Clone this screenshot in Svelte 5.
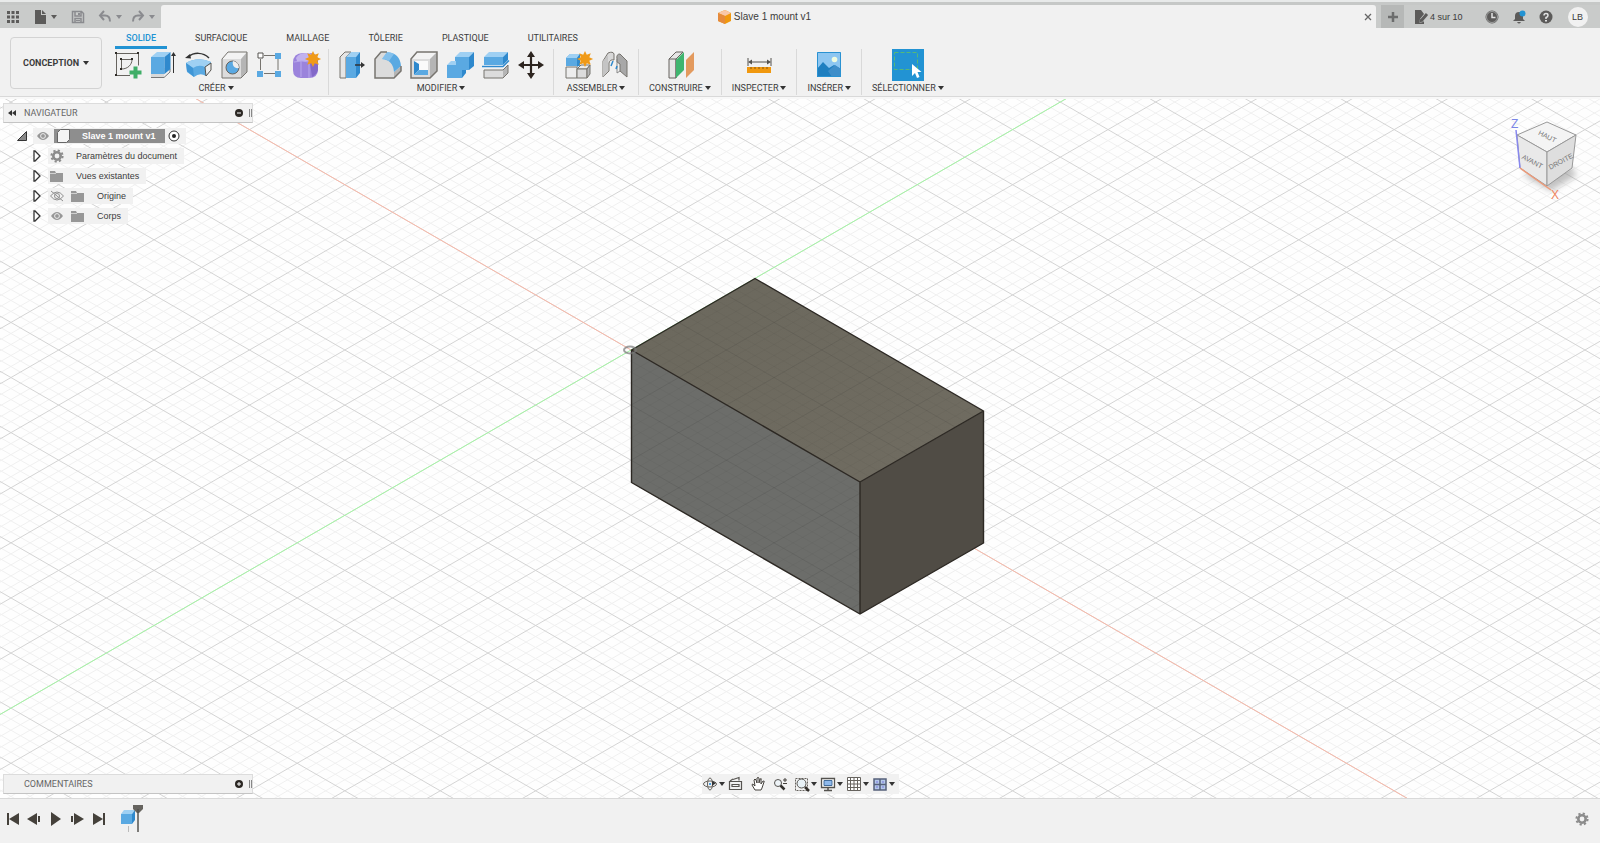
<script lang="ts">
  // Modelling workspace: document bar, ribbon, 3D canvas with browser tree, timeline.

  interface Group {
    label: string
    icons: string[]
    wide?: boolean
  }

  interface TreeRow {
    label: string
    icons: string[]
  }

  interface NavTool {
    id: string
    label: string
    menu: boolean
  }

  const TABS = ['SOLIDE', 'SURFACIQUE', 'MAILLAGE', 'TÔLERIE', 'PLASTIQUE', 'UTILITAIRES']

  const GROUPS: Group[] = [
    { label: 'CRÉER', icons: ['sketch', 'extrude', 'revolve', 'hole', 'pattern', 'form'], wide: true },
    { label: 'MODIFIER', icons: ['pressPull', 'fillet', 'shell', 'combine', 'split', 'move'], wide: true },
    { label: 'ASSEMBLER', icons: ['component', 'joint'] },
    { label: 'CONSTRUIRE', icons: ['plane'] },
    { label: 'INSPECTER', icons: ['measure'] },
    { label: 'INSÉRER', icons: ['image'] },
    { label: 'SÉLECTIONNER', icons: ['select'] }
  ]

  const TREE: TreeRow[] = [
    { label: 'Paramètres du document', icons: ['gear'] },
    { label: 'Vues existantes', icons: ['folder'] },
    { label: 'Origine', icons: ['eyeOff', 'folder'] },
    { label: 'Corps', icons: ['eye', 'folder'] }
  ]

  const NAV: NavTool[] = [
    { id: 'orbit', label: 'Orbite', menu: true },
    { id: 'lookAt', label: 'Regarder', menu: false },
    { id: 'pan', label: 'Panoramique', menu: false },
    { id: 'zoom', label: 'Zoom', menu: false },
    { id: 'zoomWindow', label: 'Fenêtre de zoom', menu: true },
    { id: 'display', label: 'Affichage', menu: true },
    { id: 'grid', label: 'Grille', menu: true },
    { id: 'views', label: 'Fenêtres', menu: true }
  ]

  const PLAYBACK = [
    { label: 'Début', art: '<path d="M2 2v12" stroke="#45413b" stroke-width="2"/><path d="M13 2v12L3 8z"/>' },
    { label: 'Précédent', art: '<path d="M10 2v12L0 8z"/><path d="M12 5v6" stroke="#45413b" stroke-width="2"/>' },
    { label: 'Lecture', art: '<path d="M3 1v14l10-7z"/>' },
    { label: 'Suivant', art: '<path d="M5 2v12l10-6z"/><path d="M3 5v6" stroke="#45413b" stroke-width="2"/>' },
    { label: 'Fin', art: '<path d="M14 2v12" stroke="#45413b" stroke-width="2"/><path d="M3 2v12l10-6z"/>' }
  ]

  const STAR = 'l1.8 3.8 4-1.5-1.5 4 3.8 1.7-3.8 1.8 1.5 4-4-1.6-1.8 3.9-1.8-3.9-4 1.6 1.6-4-3.9-1.8 3.9-1.7-1.6-4 4 1.5z'

  // Ribbon artwork, drawn on a 28 x 28 board.
  const RIBBON: Record<string, string> = {
    sketch: `<g fill="none" stroke="#66635e"><path d="M4.500 2.500h22v12M18 24.500H4.500v-22"/><path d="M9.500 18V8.500H20c0 5-4 9.500-10.500 9.500"/></g>
      <path fill="#2d2a26" d="M3 1h2v2H3zM25 1h2v2h-2zM3 23h2v2H3zM8 7h2v2H8zM19 7h2v2h-2zM8 17h2v2H8z"/>
      <path fill="#3fae67" d="M21.500 15.500h4v4h4v4h-4v4h-4v-4h-4v-4h4z"/>`,
    extrude: `<path d="M3 21l5-4h13l-5 7v3H3z" fill="#d9d9d9"/><path d="M3 26.500h13l6-5.500v-3" fill="none" stroke="#777"/>
      <path d="M3 6l6-5h13.500L16.500 6z" fill="#9fd0f3"/><path d="M3 6h13.500v17H3z" fill="#5aa9e2"/><path d="M16.500 6l6-5v17l-6 5z" fill="#2f89cd"/>
      <path d="M25.500 4v18" stroke="#333"/><path d="M23 5l2.500-4L28 5z" fill="#333"/>`,
    revolve: `<path d="M2 12q12-7 25-1v7l-5 7q-6-4-12 1l-7-5z" fill="#5aa9e2"/><path d="M2 12q12-7 25-1l-6 5q-6-3-12 1z" fill="#9fd0f3"/>
      <path d="M2 12l7 5 1 9-7-6z" fill="#3f96d6"/><path d="M21 16l6-4v7l-5 6z" fill="#eee" stroke="#55534f"/>
      <path d="M4 6c6-5 15-5 21 1" fill="none" stroke="#333" stroke-width="1.500"/><path d="M1 7l5-4 1 4.500z" fill="#333"/>`,
    hole: `<path d="M2 8l6-7h19l-6 7z" fill="#f3f3f3"/><path d="M2 8h19v19H2z" fill="#dcdcdc"/><path d="M21 8l6-7v20l-6 6z" fill="#b5b5b5"/>
      <path d="M2 8l6-7h19v20l-6 6H2z" fill="none" stroke="#77746f"/><circle cx="12.500" cy="16.500" r="6.500" fill="#5aa9e2" stroke="#66635e"/>
      <path d="M13 10a6.500 6.500 0 0 1 6 7c-5 1-7-3-6-7z" fill="#eee"/>`,
    pattern: `<path d="M8 4.500h11M4.500 8v11M22 8v11M8 22.500h11" stroke="#77746f"/><path d="M2 2h5v5H2z" fill="#fff" stroke="#55534f"/>
      <path fill="#5aa9e2" d="M19 2h6v6h-6zM1 20h6v6H1zM19 20h6v6h-6z"/>`,
    form: `<path d="M1 12q0-10 10-10h7q8 0 8 8v8q0 9-9 9H9q-8 0-8-8z" fill="#9b83dc"/><path d="M4 7q3-5 10-5h4l4 5-5 3H5z" fill="#c2b2ee"/>
      <path d="M18 12l8-4v11q-1 4-6 7z" fill="#8268c8"/><path d="M2 11q8-2 15 0v16M9 10v16" fill="none" stroke="#b8a8ec"/>
      <path fill="#f09a18" d="M21 0${STAR}"/>`,
    pressPull: `<path d="M3 6l5-5h6L9 6v21H3z" fill="#e5e5e5" stroke="#77746f"/><path d="M9 6l5-5h9l-4 5z" fill="#9fd0f3"/>
      <path d="M9 6h10v21H9z" fill="#5aa9e2"/><path d="M19 6l4-5v21l-4 5z" fill="#2f89cd"/><path d="M18 14h7" stroke="#333" stroke-width="1.500"/><path d="M24 11l4 3-4 3z" fill="#333"/>`,
    fillet: `<path d="M2 8l6-7h6L9 8q12 0 12 13v6H2z" fill="#dcdcdc"/><path d="M21 21l7-6v5l-7 7z" fill="#b5b5b5"/>
      <path d="M9 8l5-7q13 1 14 14l-7 6Q20 9 9 8z" fill="#5aa9e2"/><path d="M9 8l5-7q4 0 7 2l-5 7q-3-2-7-2z" fill="#9fd0f3" opacity=".6"/>
      <path d="M14 1H8L2 8v19h19l7-7v-5" fill="none" stroke="#77746f" stroke-width="1.500"/>`,
    shell: `<path d="M2 8l6-7h20l-7 7z" fill="#f3f3f3"/><path d="M2 8h19v19H2z" fill="#dcdcdc"/><path d="M21 8l7-7v19l-7 7z" fill="#b5b5b5"/>
      <path d="M2 8l6-7h20v19l-7 7H2z" fill="none" stroke="#77746f" stroke-width="1.500"/><path d="M5 10h14v14H5z" fill="#fafafa"/>
      <path d="M5 10l5 3v6l-5 5z" fill="#2f89cd"/><path d="M5 24l5-5h9v5z" fill="#5aa9e2"/>`,
    combine: `<path d="M10 6l5-5h14l-5 5z" fill="#9fd0f3"/><path d="M10 6h14v13H10z" fill="#5aa9e2"/><path d="M24 6l5-5v14l-5 4z" fill="#2f89cd"/>
      <path d="M2 14l4-4h5v4z" fill="#9fd0f3"/><path d="M2 14h15v13H2z" fill="#5aa9e2"/><path d="M17 19h4v3l-4 5z" fill="#2f89cd"/>`,
    split: `<path d="M3 6l5-5h19l-5 5z" fill="#9fd0f3"/><path d="M3 6h19v8H3z" fill="#5aa9e2"/><path d="M22 6l5-5v8l-5 5z" fill="#2f89cd"/>
      <path d="M3 19h19v8H3z" fill="#dcdcdc"/><path d="M22 19l5-5v8l-5 5z" fill="#b5b5b5"/><path d="M3 19h19l5-5v8l-5 5H3z" fill="none" stroke="#77746f"/>
      <path d="M1 14h22l5-5v3l-5 5H1z" fill="#f6f6f6"/><path d="M1 15.500h21l6-6" fill="none" stroke="#2f89cd" stroke-width="1.500"/>`,
    move: `<path d="M14 3v22M3 14h22" stroke="#2d2520" stroke-width="2.200"/><path fill="#2d2520" d="M14 0l4 6h-8zM14 28l4-6h-8zM1 14l6-4v8zM27 14l-6-4v8z"/>`,
    component: `<path d="M2 7l4-4h10v12H2z" fill="#5aa9e2"/><path d="M2 7l4-4h10l-3 4z" fill="#9fd0f3"/><path d="M13 7l3-4v11l-3 2z" fill="#2f89cd"/>
      <path d="M2 16h11v11H2zM13 18l4-4h9l-3 4z" fill="#ededed" stroke="#77746f"/><path d="M13 18h10v9H13z" fill="#dcdcdc" stroke="#77746f"/>
      <path d="M23 18l3-4v9l-3 4z" fill="#b5b5b5" stroke="#77746f"/><path fill="#f09a18" d="M21 0${STAR}"/>`,
    joint: `<path d="M3 10l5-8q5-2 6 1v6q-4-1-5 3v8l-6 6z" fill="#d8d8d8" stroke="#77746f"/><path d="M3 10l5-6v16l-5 6z" fill="#c4c4c4"/>
      <path d="M27 10l-7-7q-4 0-3 5v3l3 2v7l7 6z" fill="#a8a8a8" stroke="#77746f"/><path d="M17 8v14l3-2" fill="none" stroke="#888"/>
      <path d="M13 10l-2 5M17 15l-1 3" stroke="#2f89cd" stroke-width="1.500"/>`,
    plane: `<path d="M3 8l7-7h7l-7 7v19H3z" fill="#e5e5e5" stroke="#66635e"/><path d="M3 8h7v19" fill="none" stroke="#66635e"/>
      <path d="M10 9l8-8v18l-8 8z" fill="#3fb56f"/><path d="M20 9l8-8v18l-8 8z" fill="#e39a5e"/>`,
    measure: `<path d="M3 7v8M26 7v8M5 11h19" stroke="#55534f"/><path d="M3 11l4-2.500v5zM26 11l-4-2.500v5z" fill="#55534f"/>
      <path d="M2 16h24v6H2z" fill="#f0980f"/><path d="M6 16v2M10 16v2M14 16v2M18 16v2M22 16v2" stroke="#8a560a"/>`,
    image: `<path d="M2 1h24v25H2z" fill="#8dc6f1"/><path d="M2 18l6-7 6 6 5-3 7 4v8H2z" fill="#1f7fc0"/><path d="M13 20l7-6 6 4v8h-9z" fill="#3f8ec9"/>
      <circle cx="19.500" cy="8.500" r="2.800" fill="#effbe0"/><path d="M2.500 1.500h23v24h-23z" fill="none" stroke="#2a92d2"/>`,
    select: `<path d="M-2-2h32v32H-2z" fill="#2293d3"/><path d="M.500 1.500h23v17H.500z" fill="none" stroke="#55b878" stroke-dasharray="4 2"/>
      <path d="M18 13v12l3-3 2 5 2.500-1-2-5h4z" fill="#fff"/>`
  }

  // Small glyphs, 16 x 16.
  const SMALL: Record<string, string> = {
    apps: '<path fill="#5c5b5a" d="M2 2h3v3H2zM6.500 2h3v3h-3zM11 2h3v3h-3zM2 6.500h3v3H2zM6.500 6.500h3v3h-3zM11 6.500h3v3h-3zM2 11h3v3H2zM6.500 11h3v3h-3zM11 11h3v3h-3z"/>',
    file: '<path fill="#5c5b5a" d="M3 1h6v5h5v9H3zM10 1l4 4h-4z"/>',
    save: '<path fill="none" stroke="#8a8b8f" stroke-width="1.500" d="M2.500 2.500h9l2 2v9h-11zM5 3v4h6V3M5 13V9.500h6V13"/><path d="M8 4h2v2H8zM6 11h4v1H6z" fill="#8a8b8f"/>',
    undo: '<path fill="none" stroke="#8a8b8f" stroke-width="2" d="M4 6.500h4q5 0 5 6"/><path fill="none" stroke="#8a8b8f" stroke-width="2" d="M7 2L3 6.500 7 11"/>',
    redo: '<path fill="none" stroke="#8a8b8f" stroke-width="2" d="M12 6.500H8q-5 0-5 6"/><path fill="none" stroke="#8a8b8f" stroke-width="2" d="M9 2l4 4.500L9 11"/>',
    plus: '<path d="M8 3v10M3 8h10" stroke="#6c6d6d" stroke-width="2.500"/>',
    edit: '<path fill="#5c5b5a" d="M2 1h6l3 4-4 5-1 4 4-1 1-1v3H2z"/><path stroke="#5c5b5a" stroke-width="3" d="M14 5L8 12"/><path fill="#5c5b5a" d="M7 10l3 2-4 2z"/>',
    clock: '<circle cx="8" cy="8" r="6" fill="#5c5b5a" stroke="#5c5b5a"/><circle cx="8" cy="8" r="5.500" fill="none" stroke="#b9bbbb" stroke-width=".7"/><path d="M8 4v4.500h3.500" fill="none" stroke="#e2e3e3" stroke-width="1.500"/>',
    bell: '<path fill="#5c5b5a" d="M2 12l2-2V7q0-4 4-4t4 4v3l2 2zM6 13h4q-2 3-4 0z"/><circle cx="11.500" cy="4.500" r="3" fill="#2293d3"/>',
    help: '<circle cx="8" cy="8" r="6.500" fill="#5c5b5a"/><path d="M6 6.500q0-2 2-2t2 1.700-2 2.300V10" fill="none" stroke="#e2e3e3" stroke-width="1.500"/><path d="M7 11h2v1.500H7z" fill="#e2e3e3"/>',
    gear: '<g fill="none" stroke="#8c8c8c"><circle cx="8" cy="8" r="3.700" stroke-width="2.600"/><circle cx="8" cy="8" r="5.600" stroke-width="2" stroke-dasharray="2.200 2.200"/></g>',
    folder: '<path fill="#979797" d="M1 3h5l1 2h7v9H1z"/><path d="M1 5.500h6" stroke="#d0d0d0"/>',
    eye: '<path fill="#979797" d="M2 8q6-8 12 0-6 8-12 0z"/><circle cx="8" cy="8" r="2.400" fill="#979797" stroke="#eee"/>',
    eyeOff: '<path fill="none" stroke="#8f8f8f" d="M1.500 8q6.500-8 13 0-6.500 8-13 0zM2 3l12 10"/><circle cx="8" cy="8" r="2.500" fill="none" stroke="#8f8f8f"/>',
    orbit: '<g fill="none" stroke="#66635e"><ellipse cx="8" cy="8" rx="6.500" ry="3"/><ellipse cx="8" cy="8" rx="2.500" ry="6"/></g><path d="M10 5l4 2-4 3z" fill="#333"/><path d="M7 7h2v2H7z" fill="#4a9fe0"/>',
    lookAt: '<path d="M1.500 5.500h12v8h-12zM4 8.500h7v2H4zM2 5l3-2M5 3.500l6-2v3" fill="none" stroke="#55534f" stroke-width="1.200"/>',
    pan: '<path d="M5 14L2 9q0-2 2 0l1 1-1-6q1-2 2 0l1 3V2q1-1 2 0v5l1-4q2-1 1 1v4l2-3q2 0 1 1l-2 6-1 2z" fill="#fff" stroke="#44413c"/>',
    zoom: '<circle cx="6" cy="7" r="3.500" fill="#eef4f8" stroke="#55534f"/><path d="M8.500 9.500l4 4" stroke="#33302c" stroke-width="2.500"/><path d="M11 4h4M13 2v4M11 7.500h4" stroke="#44413c"/>',
    zoomWindow: '<path d="M1.500 2.500h12v12h-12z" fill="none" stroke="#66635e" stroke-dasharray="2 1"/><circle cx="7.500" cy="7.500" r="4.500" fill="#e8f1f6" stroke="#55534f"/><path d="M11 11l4 4" stroke="#33302c" stroke-width="2.500"/>',
    display: '<path d="M1.500 2.500h13v9h-13z" fill="#fff" stroke="#55534f" stroke-width="1.300"/><path d="M4 4.500h8v5H4z" fill="#8fb9ec" stroke="#446e9c"/><path d="M4 14.500h8M8 11v3" stroke="#55534f" stroke-width="1.500"/>',
    grid: '<path d="M1.500 1.500h13v13h-13zM4.500 2v12M8 2v12M11.500 2v12M2 4.500h12M2 8h12M2 11.500h12" fill="#fff" stroke="#66635e"/>',
    views: '<path d="M2 3h12v11H2z" fill="#b4c8ea" stroke="#55607a" stroke-width="1.500"/><path d="M8 3v11M2 8.500h12" stroke="#55607a" stroke-width="1.500"/><path d="M4 6h2M10 6h2M4 11h2M10 11h2" stroke="#7a77dd"/>'
  }

  // Isometric grid: every line runs through the origin lattice at the same slope.
  const ORIGIN = { x: 631, y: 350 }
  const SLOPE = 0.5776
  const MAJOR = 55.1
  const DIVISIONS = 5
  const LEFT = -1000
  const RIGHT = 2600

  function isoLine(offset: number, slope: number): string {
    const y = (x: number) => (ORIGIN.y + offset + slope * (x - ORIGIN.x)).toFixed(1)
    return `M${LEFT} ${y(LEFT)}L${RIGHT} ${y(RIGHT)}`
  }

  let minorPath = ''
  let majorPath = ''
  for (let i = -200; i <= 200; i++) {
    const offset = (i * MAJOR) / DIVISIONS
    const d = isoLine(offset, SLOPE) + isoLine(offset, -SLOPE)
    if (i % DIVISIONS === 0) majorPath += d
    else minorPath += d
  }

  let activeTab = $state('SOLIDE')
</script>

{#snippet small(name: string)}
  <svg class="small" viewBox="0 0 16 16" aria-hidden="true">{@html SMALL[name]}</svg>
{/snippet}

{#snippet caret()}
  <span class="caret" aria-hidden="true"></span>
{/snippet}

<div class="app">
  <header class="docbar">
    <div class="quick">
      <button type="button" aria-label="Données">{@render small('apps')}</button>
      <button type="button" class="file" aria-label="Fichier">{@render small('file')}{@render caret()}</button>
      <button type="button" class="save" aria-label="Enregistrer">{@render small('save')}</button>
      <button type="button" class="dim" aria-label="Annuler">{@render small('undo')}{@render caret()}</button>
      <button type="button" class="dim" aria-label="Rétablir">{@render small('redo')}{@render caret()}</button>
    </div>
    <div class="doctab">
      <div class="doctitle">
        <svg viewBox="0 0 13 14" width="13" height="14" aria-hidden="true">
          <path d="M0 3l7-3 6 3v8l-6 3-7-3z" fill="#f0980f" />
          <path d="M0 3l7-3 6 3-6 3z" fill="#f9c7a8" />
          <path d="M0 3l7 3v8l-7-3z" fill="#e58a3c" />
        </svg>
        <span>Slave 1 mount v1</span>
      </div>
      <button type="button" class="close" aria-label="Fermer">
        <svg viewBox="0 0 8 8" width="8" height="8"><path d="M1 1l6 6M7 1L1 7" stroke="#666" stroke-width="1.300" /></svg>
      </button>
    </div>
    <div class="account">
      <button type="button" class="add" aria-label="Nouvelle conception">{@render small('plus')}</button>
      <button type="button" class="quota">{@render small('edit')}4 sur 10</button>
      <button type="button" aria-label="Travaux">{@render small('clock')}</button>
      <button type="button" aria-label="Notifications">{@render small('bell')}</button>
      <button type="button" aria-label="Aide">{@render small('help')}</button>
      <button type="button" class="avatar">LB</button>
    </div>
  </header>

  <div class="ribbon">
    <button type="button" class="workspace">CONCEPTION{@render caret()}</button>
    <div class="tools">
      <div class="tabs" role="tablist">
        {#each TABS as tab (tab)}
          <button
            type="button"
            role="tab"
            class:active={tab === activeTab}
            aria-selected={tab === activeTab}
            onclick={() => (activeTab = tab)}
          >
            {tab}
          </button>
        {/each}
      </div>
      <div class="groups">
        {#each GROUPS as group (group.label)}
          <div class="group" class:wide={group.wide}>
            <div class="icons">
              {#each group.icons as icon (icon)}
                <button type="button" aria-label={icon}>
                  <svg viewBox="0 0 28 28" aria-hidden="true">{@html RIBBON[icon]}</svg>
                </button>
              {/each}
            </div>
            <button type="button" class="caption">{group.label}{@render caret()}</button>
          </div>
        {/each}
      </div>
    </div>
  </div>

  <main class="canvas">
    <svg class="scene" viewBox="0 99 1600 699" preserveAspectRatio="xMidYMid slice" aria-label="Vue 3D">
      <defs>
        <clipPath id="lit-faces"><path d="M631.500 350L755 278.500 983.500 411 860 482V614L631.500 482.500z" /></clipPath>
        <linearGradient id="top-face" x1="0" y1="0" x2="1" y2="1">
          <stop offset="0" stop-color="#6b685d" />
          <stop offset="1" stop-color="#706c61" />
        </linearGradient>
      </defs>
      <path d={minorPath} class="minor" />
      <path d={majorPath} class="major" />
      <path d={isoLine(0, SLOPE)} stroke="#f9b9a9" />
      <path d={isoLine(0, -SLOPE)} stroke="#a5f7a5" />
      <path d="M631.500 350L755 278.500 983.500 411 860 482z" fill="url(#top-face)" />
      <path d="M631.500 350L860 482v132L631.500 482.500z" fill="#6c6d6a" />
      <path d="M860 482l123.500-71v132L860 614z" fill="#504c45" />
      <g clip-path="url(#lit-faces)">
        <path d={minorPath} stroke="#222" stroke-opacity=".03" />
        <path d={majorPath} stroke="#222" stroke-opacity=".11" />
      </g>
      <path
        d="M631.500 350L755 278.500 983.500 411v132L860 614 631.500 482.500zL860 482l123.500-71M860 482v132"
        fill="none"
        stroke="#2c2823"
        stroke-width="1.400"
        stroke-linejoin="round"
      />
      <ellipse cx="630" cy="350" rx="6" ry="3.500" fill="none" stroke="#777" stroke-opacity=".7" stroke-width="2" />
    </svg>

    <section class="browser">
      <div class="panel">
        <button type="button" class="collapse" aria-label="Réduire">
          <svg viewBox="0 0 10 8" width="10" height="8"><path d="M5 1v6L1 4zM9 1v6L5 4z" fill="#333" /></svg>
        </button>
        <h2>NAVIGATEUR</h2>
        <button type="button" aria-label="Masquer le navigateur">
          <svg viewBox="0 0 8 8" width="8" height="8"><circle cx="4" cy="4" r="4" fill="#2b2723" /><path d="M2 4h4" stroke="#fff" /></svg>
        </button>
        <span class="grip"></span>
      </div>
      <ul class="tree">
        <li class="root">
          <svg viewBox="0 0 10 10" width="10" height="10"><path d="M9.500.500v9h-9z" fill="#888" stroke="#333" /></svg>
          <div class="pill">
            {@render small('eye')}
            <span class="selected">
              <svg viewBox="0 0 14 14" width="14" height="14"><path d="M1.500 3.500l3-3h9v10l-3 3h-9z" fill="#f4f4f4" stroke="#666" /></svg>
              Slave 1 mount v1
            </span>
            <svg viewBox="0 0 12 12" width="12" height="12">
              <circle cx="6" cy="6" r="5" fill="#fff" stroke="#333" /><circle cx="6" cy="6" r="2" fill="#222" />
            </svg>
          </div>
        </li>
        {#each TREE as row (row.label)}
          <li>
            <svg viewBox="0 0 8 12" width="8" height="12"><path d="M1 1h1l5 5-5 5H1z" fill="#fff" stroke="#333" stroke-width="1.300" /></svg>
            <div class="pill">
              {#each row.icons as icon (icon)}
                {@render small(icon)}
              {/each}
              <span class="name">{row.label}</span>
            </div>
          </li>
        {/each}
      </ul>
    </section>

    <svg class="viewcube" viewBox="0 0 80 90" width="80" height="90" aria-label="Cube de vue">
      <defs>
        <filter id="soft"><feGaussianBlur stdDeviation="3" /></filter>
      </defs>
      <path d="M14 65l28 16 26-16-6-8-34 2z" fill="#999" opacity=".6" filter="url(#soft)" />
      <path d="M38 12L8 25l30 17 29-17z" fill="#f4f4f4" stroke="#999" />
      <path d="M8 25l30 17v34L11 58z" fill="#e9e9e9" stroke="#999" />
      <path d="M38 42l29-17-4 33-25 18z" fill="#dedede" stroke="#999" />
      <path d="M7 20l4 38" stroke="#8888ee" stroke-width="1.500" />
      <path d="M11 58l31 22" stroke="#ee9a78" stroke-width="1.500" />
      <g class="faces">
        <text transform="translate(38 27) rotate(26)">HAUT</text>
        <text transform="translate(23 52) rotate(28)">AVANT</text>
        <text transform="translate(52 52) rotate(-28)">DROITE</text>
      </g>
      <text x="2" y="18" class="axis" fill="#7a86e6">Z</text>
      <text x="42" y="89" class="axis" fill="#ef8460">X</text>
    </svg>

    <div class="bottom">
      <div class="panel">
        <h2>COMMENTAIRES</h2>
        <button type="button" aria-label="Afficher les commentaires">
          <svg viewBox="0 0 8 8" width="8" height="8"><circle cx="4" cy="4" r="4" fill="#2b2723" /><path d="M2 4h4M4 2v4" stroke="#fff" /></svg>
        </button>
        <span class="grip"></span>
      </div>
      <div class="navbar" role="toolbar" aria-label="Navigation">
        {#each NAV as tool (tool.id)}
          <button type="button" aria-label={tool.label} class:menu={tool.menu}>
            {@render small(tool.id)}{#if tool.menu}{@render caret()}{/if}
          </button>
        {/each}
      </div>
    </div>
  </main>

  <footer class="timeline">
    <div class="playback">
      {#each PLAYBACK as step (step.label)}
        <button type="button" aria-label={step.label}>
          <svg class="small" viewBox="0 0 16 16" fill="#45413b">{@html step.art}</svg>
        </button>
      {/each}
    </div>
    <button type="button" class="feature" aria-label="Extrusion 1">
      <svg viewBox="0 0 24 28" width="24" height="28">
        <path d="M1 9l3-4h11l-3 4z" fill="#9fd0f3" /><path d="M1 9h11v10H1z" fill="#5aa9e2" /><path d="M12 9l3-4v10l-3 4z" fill="#2f89cd" />
        <path d="M8.500 21v6" stroke="#bbb" /><path d="M13 0h10v4l-4 4h-2l-4-4z" fill="#66645f" /><path d="M18 4v23" stroke="#55534f" stroke-width="1.500" />
      </svg>
    </button>
    <button type="button" class="settings" aria-label="Paramètres">{@render small('gear')}</button>
  </footer>
</div>

<style>
  :global(body) {
    margin: 0;
  }

  .app {
    display: flex;
    flex-direction: column;
    min-height: 100vh;
    background: #f1f1f1;
    color: #3c3c3c;
    font-family: 'Liberation Sans', Arial, sans-serif;
    font-size: 9px;
    line-height: 12px;
  }

  button {
    display: flex;
    align-items: center;
    justify-content: center;
    margin: 0;
    padding: 0;
    border: 0;
    background: none;
    color: inherit;
    font: inherit;
    white-space: nowrap;
  }

  svg {
    display: block;
    flex: none;
    overflow: visible;
  }

  .small {
    width: 16px;
    height: 16px;
  }

  .caret {
    border: 3px solid transparent;
    border-top: 4px solid #333;
    border-bottom: 0;
  }

  /* document bar */
  .docbar {
    display: flex;
    height: 23px;
    margin-top: 2px;
    padding-right: 2px;
    border-top: 3px solid #c6c8c7;
    background: #c9cbca;
    box-shadow: 0 -2px #e8eaea;
  }

  .quick {
    display: flex;
    align-items: center;
    gap: 8px;
    width: 156px;
    padding-left: 5px;
  }

  .quick button {
    gap: 3px;
  }

  .quick .file {
    margin-left: 3px;
  }

  .quick .save {
    margin: 0 3px 0 5px;
  }

  .quick .caret {
    border-top-color: #5c5b5a;
  }

  .quick .dim .caret {
    border-top-color: #8a8b8f;
  }

  .doctab {
    display: flex;
    flex: 1;
    align-items: center;
    padding: 0 4px;
    border-radius: 3px 3px 0 0;
    background: #f1f1f1;
  }

  .doctitle {
    display: flex;
    flex: 1;
    align-items: center;
    justify-content: center;
    gap: 3px;
    font-size: 10px;
  }

  .close {
    width: 8px;
  }

  .account {
    display: flex;
    align-items: center;
    gap: 11px;
    box-sizing: border-box;
    width: 222px;
    padding-left: 5px;
  }

  .add {
    width: 23px;
    height: 23px;
    background: #b6b8b7;
  }

  .quota {
    gap: 1px;
    margin: 0 10px 0 -2px;
  }

  .avatar {
    width: 20px;
    height: 20px;
    margin-left: 3px;
    border-radius: 50%;
    background: #f1f1f1;
  }

  /* ribbon */
  .ribbon {
    display: flex;
    height: 68px;
    border-bottom: 1px solid #d9d9d9;
    font-family: Roboto, 'Liberation Sans', sans-serif;
  }

  .workspace {
    box-sizing: border-box;
    width: 92px;
    height: 52px;
    gap: 4px;
    margin: 9px 2px 0 10px;
    border: 1px solid #d3d3d3;
    border-radius: 4px;
    font-weight: bold;
  }

  .tabs {
    display: flex;
    gap: 17px;
    height: 21px;
    padding-left: 11px;
  }

  .tabs button {
    padding: 2px 11px 0;
    border-bottom: 3px solid transparent;
  }

  .tabs .active {
    border-bottom-color: #2293d3;
    color: #2293d3;
    font-weight: 500;
  }

  .groups {
    display: flex;
  }

  .group {
    display: flex;
    flex-direction: column;
    align-items: center;
    height: 46px;
    padding: 0 10px;
    border-right: 1px solid #d9d9d9;
  }

  .group:last-child {
    border: 0;
  }

  .wide {
    padding: 0 8px;
  }

  .icons {
    display: flex;
    flex: none;
    align-items: center;
    gap: 8px;
    height: 32px;
  }

  .icons svg {
    width: 28px;
    height: 28px;
  }

  .caption {
    flex: none;
    gap: 2px;
    height: 14px;
  }

  /* canvas */
  .canvas {
    position: relative;
    display: flex;
    flex: 1;
    flex-direction: column;
    justify-content: space-between;
    min-height: 400px;
    overflow: hidden;
    border-top: 2px solid #f8f8f8;
    background: #fefefe;
  }

  .scene {
    position: absolute;
    inset: 0;
    width: 100%;
    height: 100%;
  }

  .minor {
    stroke: #f0f0f0;
  }

  .major {
    stroke: #d4d4d4;
  }

  .browser {
    position: relative;
    padding: 4px 0 0 3px;
  }

  .panel {
    display: flex;
    align-items: center;
    box-sizing: border-box;
    width: 250px;
    height: 20px;
    padding: 0 0 0 3px;
    border: 1px solid #dcdcdc;
    border-bottom-color: #c4c4c4;
    background: #f1f1f1;
    font-family: Roboto, 'Liberation Sans', sans-serif;
  }

  .panel h2 {
    flex: 1;
    margin: 0 0 0 7px;
    color: #666;
    font-size: 9px;
    font-weight: normal;
  }

  .bottom h2 {
    margin-left: 17px;
  }

  .grip {
    width: 1px;
    height: 8px;
    margin-left: 6px;
    border: solid #888;
    border-width: 0 1px;
  }

  .tree {
    margin: 3px 0 0;
    padding: 0;
    list-style: none;
  }

  .tree li {
    display: flex;
    align-items: center;
    gap: 7px;
    height: 20px;
    padding-left: 30px;
  }

  .tree .root {
    gap: 6px;
    padding-left: 14px;
  }

  .pill {
    display: flex;
    align-items: center;
    gap: 5px;
    height: 16px;
    padding: 0 7px 0 1px;
    background: #f1f1f1;
  }

  .name {
    margin-left: 6px;
  }

  .root .pill {
    gap: 3px;
    padding: 0 6px 0 2px;
  }

  .selected {
    display: flex;
    align-items: center;
    gap: 12px;
    height: 14px;
    padding: 0 9px 0 2px;
    background: #8e8e8e;
    color: #fff;
    font-weight: bold;
  }

  .viewcube {
    position: absolute;
    top: 11px;
    right: 11px;
  }

  .faces text {
    fill: #777;
    font-size: 7px;
    text-anchor: middle;
    dominant-baseline: middle;
  }

  .axis {
    font-size: 12px;
  }

  .bottom {
    position: relative;
    display: grid;
    grid-template-columns: 1fr auto 1fr;
    padding: 0 3px 4px;
  }

  .navbar {
    display: flex;
    align-items: center;
    gap: 6px;
    box-sizing: border-box;
    width: 197px;
    background: #f1f1f1;
  }

  .navbar button {
    gap: 1px;
  }

  .navbar .menu {
    margin-right: -3px;
  }

  /* timeline */
  .timeline {
    display: flex;
    align-items: center;
    box-sizing: border-box;
    height: 45px;
    padding: 0 10px 4px 6px;
    border-top: 1px solid #d9d9d9;
  }

  .playback {
    display: flex;
    gap: 5px;
  }

  .feature {
    margin-left: 14px;
  }

  .settings {
    margin-left: auto;
  }
</style>
